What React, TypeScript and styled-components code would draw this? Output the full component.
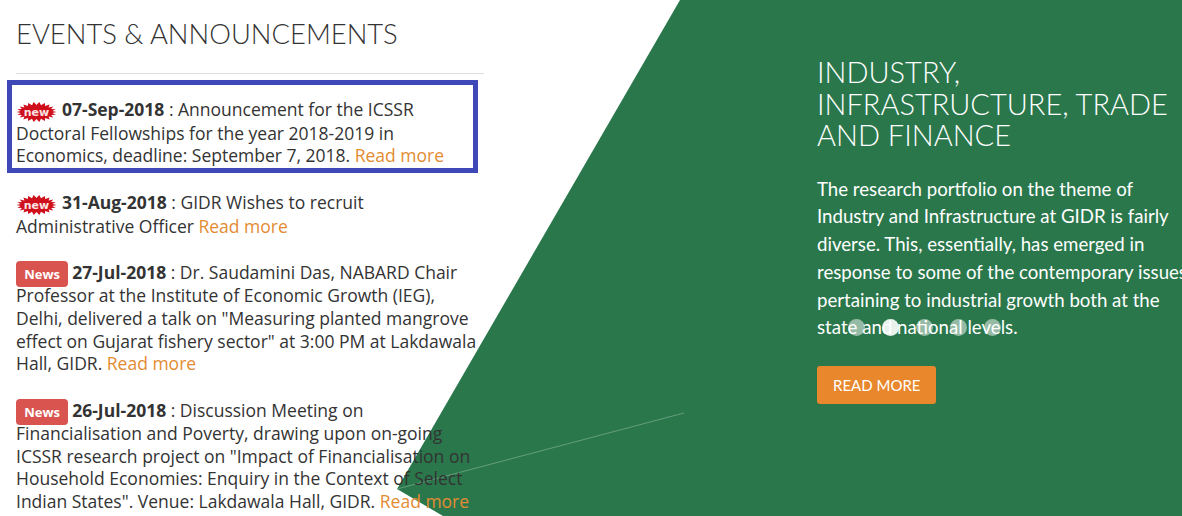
import styled, { createGlobalStyle } from "styled-components";

const GlobalStyle = createGlobalStyle`
  html, body {
    margin: 0;
    padding: 0;
    background: #fff;
  }
`;

const Page = styled.div`
  position: relative;
  width: 1182px;
  height: 516px;
  overflow: hidden;
  display: grid;
  grid-template-columns: 817px 365px;
  background: #fff;
`;

/* green wedge sits behind the news list, the text runs over it */
const GreenWedge = styled.div`
  position: absolute;
  inset: 0;
  background: #2a774c;
  clip-path: polygon(680px 0, 1182px 0, 1182px 516px, 443px 516px, 397px 489px);
`;

const Hairline = styled.svg`
  position: absolute;
  left: 397px;
  top: 412px;
`;

const NewsColumn = styled.section`
  position: relative;
  padding: 16px 0 0 16px;
`;

const Title = styled.h2`
  margin: 0;
  font: 300 27.4px/36px Lato, sans-serif;
  color: #333;
  width: 468px;
  padding-bottom: 21px;
  border-bottom: 1px solid #ddd;
`;

const NewsList = styled.div`
  margin-top: 6px;
  display: flex;
  flex-direction: column;
  gap: 24px;
  width: 464px;
`;

const NewsItem = styled.p<{ $boxed?: boolean }>`
  margin: ${(p) => (p.$boxed ? "0 2px -5.5px -9px" : "0")};
  padding: ${(p) => (p.$boxed ? "13px 0 0.7px 4px" : "0")};
  border: ${(p) => (p.$boxed ? "5px solid #3f48b7" : "none")};
  font: 400 17.5px/22.75px "Open Sans", sans-serif;
  color: #333;
`;

const NewsDate = styled.strong`
  font-weight: 700;
`;

const ReadLink = styled.a`
  color: #e38b32;
  text-decoration: none;
`;

const NewsBadge = styled.span`
  background: #d9534f;
  color: #fff;
  font: 700 13px/16px "Open Sans", sans-serif;
  padding: 4px 8.2px;
  border-radius: 4px;
  margin-right: 4px;
`;

const StickerSvg = styled.svg`
  display: inline-block;
  width: 41px;
  height: 20px;
  margin-right: 5px;
  vertical-align: -5.5px;
`;

const burstPoints = (() => {
  const pts: string[] = [];
  const n = 22;
  for (let i = 0; i < n * 2; i++) {
    const a = (Math.PI * i) / n;
    const rx = i % 2 === 0 ? 20 : 16;
    const ry = i % 2 === 0 ? 10 : 7;
    pts.push(`${(20.5 + rx * Math.cos(a)).toFixed(1)},${(10 + ry * Math.sin(a)).toFixed(1)}`);
  }
  return pts.join(" ");
})();

const NewSticker = () => (
  <StickerSvg viewBox="0 0 41 20">
    <polygon points={burstPoints} fill="#cf0f1c" />
    <text
      x="20.5"
      y="14"
      textAnchor="middle"
      fontFamily="'DejaVu Sans', sans-serif"
      fontWeight="700"
      fontSize="11"
      fill="#fbe3e3"
    >
      new
    </text>
  </StickerSvg>
);

const Slide = styled.section`
  position: relative;
  padding-top: 56px;
  color: #fff;
  width: 375px;
`;

const SlideTitle = styled.h3`
  margin: 0;
  font: 300 29px/31.5px Lato, sans-serif;
`;

const SlideText = styled.p`
  margin: 25px 0 0;
  font: 400 18.65px/27.8px Lato, sans-serif;
`;

const MoreButton = styled.a`
  display: inline-block;
  margin-top: 24px;
  padding: 0 16px;
  height: 38px;
  background: #e8872b;
  border-radius: 3px;
  color: #fff;
  font: 400 15px/38px Lato, sans-serif;
`;

const Dots = styled.div`
  position: absolute;
  left: 31px;
  top: 319px;
  display: flex;
  gap: 17px;
`;

const Dot = styled.span<{ $active?: boolean }>`
  width: 17px;
  height: 17px;
  border-radius: 50%;
  background: #fff;
  opacity: ${(p) => (p.$active ? 0.9 : 0.5)};
`;

export default function App() {
  return (
    <Page>
      <GlobalStyle />
      <GreenWedge />
      <Hairline width="288" height="78" viewBox="0 0 288 78">
        <line x1="0" y1="77" x2="287" y2="1" stroke="#7fae93" strokeWidth="0.7" />
      </Hairline>
      <NewsColumn>
        <Title>EVENTS &amp; ANNOUNCEMENTS</Title>
        <NewsList>
          <NewsItem $boxed>
            <NewSticker />
            <NewsDate>07-Sep-2018</NewsDate> : Announcement for the ICSSR Doctoral Fellowships for
            the year 2018-2019 in Economics, deadline: September 7, 2018.{" "}
            <ReadLink>Read more</ReadLink>
          </NewsItem>
          <NewsItem>
            <NewSticker />
            <NewsDate>31-Aug-2018</NewsDate> : GIDR Wishes to recruit Administrative Officer{" "}
            <ReadLink>Read more</ReadLink>
          </NewsItem>
          <NewsItem>
            <NewsBadge>News</NewsBadge>
            <NewsDate>27-Jul-2018</NewsDate> : Dr. Saudamini Das, NABARD Chair Professor at the
            Institute of Economic Growth (IEG), Delhi, delivered a talk on "Measuring planted
            mangrove effect on Gujarat fishery sector" at 3:00 PM at Lakdawala Hall, GIDR.{" "}
            <ReadLink>Read more</ReadLink>
          </NewsItem>
          <NewsItem>
            <NewsBadge>News</NewsBadge>
            <NewsDate>26-Jul-2018</NewsDate> : Discussion Meeting on Financialisation and Poverty,
            drawing upon on-going ICSSR research project on "Impact of Financialisation on
            Household Economies: Enquiry in the Context of Select Indian States". Venue: Lakdawala
            Hall, GIDR. <ReadLink>Read more</ReadLink>
          </NewsItem>
        </NewsList>
      </NewsColumn>
      <Slide>
        <SlideTitle>INDUSTRY, INFRASTRUCTURE, TRADE AND FINANCE</SlideTitle>
        <SlideText>
          The research portfolio on the theme of Industry and Infrastructure at GIDR is fairly
          diverse. This, essentially, has emerged in response to some of the contemporary issues
          pertaining to industrial growth both at the state and national levels.
        </SlideText>
        <MoreButton>READ MORE</MoreButton>
        <Dots>
          <Dot />
          <Dot $active />
          <Dot />
          <Dot />
          <Dot />
        </Dots>
      </Slide>
    </Page>
  );
}
